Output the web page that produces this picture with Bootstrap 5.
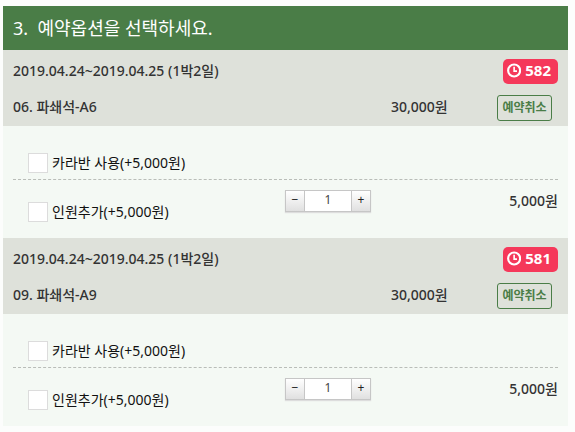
<!DOCTYPE html>
<html lang="ko">
<head>
<meta charset="utf-8">
<meta name="viewport" content="width=device-width, initial-scale=1">
<title>예약옵션</title>
<link href="https://cdn.jsdelivr.net/npm/bootstrap@5.3.0/dist/css/bootstrap.min.css" rel="stylesheet">
<style>
body{font-family:"Noto Sans","Noto Sans CJK KR",sans-serif;font-size:14px;line-height:20px;color:#333;background:#fcfdfc}
.reserve{margin:0 7px 0 3px;padding-top:6px}
.step-title{background:#4a7d47;color:#fff;font-size:18px;line-height:24px;padding:10px;font-weight:400}
.booking-head{background:#dee1da;padding:9px 10px 5px;font-weight:500;row-gap:11px}
.booking-head .caption{padding-bottom:2px}
.name-col{flex:0 0 378px}
.timer{background:#f5385a;border-radius:5px;font-size:15px;line-height:23px;font-weight:700;padding:0 7px 2px 4px;gap:4px;width:55px;height:25px;color:#fff}
.cancel-btn{--bs-btn-color:#4a7d47;--bs-btn-border-color:#4a7d47;--bs-btn-hover-bg:#4a7d47;--bs-btn-hover-color:#fff;--bs-btn-padding-x:4px;--bs-btn-padding-y:0;--bs-btn-font-size:12px;--bs-btn-line-height:24px;--bs-btn-border-radius:3px;--bs-btn-font-weight:600;width:55px;height:26px;margin-right:6px;white-space:nowrap}
.options{background:#f4f9f4;padding:0 10px}
.option-row{padding-left:15px}
.option-row label{color:#111;margin-left:4px}
.first-option{padding-top:27px;padding-bottom:6px;border-bottom:1px dashed #b9bdb8}
.second-option{padding-top:10px;padding-bottom:16px}
.second-option .pick{margin-top:12px;flex:0 0 257px}
.options .form-check-input{width:20px;height:20px;margin:0;border:1px solid #dcdcdc;border-radius:0;background-color:#fff;flex:none}
.options .form-check-input:checked{background-color:#4a7d47}
.qty{width:86px;height:22px;flex:none;border:1px solid #c6c6c6;box-shadow:0 1px 1px #ddd}
.qty button{width:18px;border:0;padding:0 0 3px;line-height:17px;font-size:12px;color:#222;background:linear-gradient(#fff,#e0e0e0)}
.qty input{flex:1 1 0;min-width:0;border:solid #c6c6c6;border-width:0 1px;padding:0 0 2px;text-align:center;font-size:12px;color:#444;background:#fff}
.price{font-weight:500;margin-top:1px}
</style>
<script defer src="https://cdn.jsdelivr.net/npm/bootstrap@5.3.0/dist/js/bootstrap.bundle.min.js"></script>
</head>
<body>
<main class="reserve">
  <h1 class="step-title m-0">3.&nbsp; 예약옵션을 선택하세요.</h1>

  <section>
    <div class="booking-head d-flex flex-column">
      <div class="d-flex justify-content-between align-items-center">
        <span class="caption">2019.04.24~2019.04.25 (1박2일)</span>
        <span class="timer d-flex align-items-center"><svg width="15" height="15" viewBox="0 0 14 14" fill="none" stroke="currentColor" aria-hidden="true"><circle cx="7" cy="7" r="5.9" stroke-width="2.1"/><path d="M7 3.3V7.6H9.8" stroke-width="1.6"/></svg>582</span>
      </div>
      <div class="d-flex align-items-center">
        <span class="name-col caption">06. 파쇄석-A6</span>
        <span class="caption">30,000원</span>
        <button type="button" class="btn cancel-btn ms-auto">예약취소</button>
      </div>
    </div>
    <div class="options">
      <div class="option-row first-option d-flex align-items-center">
        <input class="form-check-input" type="checkbox" id="caravan6"><label for="caravan6">카라반 사용(+5,000원)</label>
      </div>
      <div class="option-row second-option d-flex align-items-start">
        <div class="pick d-flex align-items-center"><input class="form-check-input" type="checkbox" id="person6"><label for="person6">인원추가(+5,000원)</label></div>
        <div class="qty d-flex"><button type="button" aria-label="감소">−</button><input type="text" value="1" aria-label="추가 인원"><button type="button" aria-label="증가">+</button></div>
        <span class="price ms-auto">5,000원</span>
      </div>
    </div>
  </section>

  <section>
    <div class="booking-head d-flex flex-column">
      <div class="d-flex justify-content-between align-items-center">
        <span class="caption">2019.04.24~2019.04.25 (1박2일)</span>
        <span class="timer d-flex align-items-center"><svg width="15" height="15" viewBox="0 0 14 14" fill="none" stroke="currentColor" aria-hidden="true"><circle cx="7" cy="7" r="5.9" stroke-width="2.1"/><path d="M7 3.3V7.6H9.8" stroke-width="1.6"/></svg>581</span>
      </div>
      <div class="d-flex align-items-center">
        <span class="name-col caption">09. 파쇄석-A9</span>
        <span class="caption">30,000원</span>
        <button type="button" class="btn cancel-btn ms-auto">예약취소</button>
      </div>
    </div>
    <div class="options">
      <div class="option-row first-option d-flex align-items-center">
        <input class="form-check-input" type="checkbox" id="caravan9"><label for="caravan9">카라반 사용(+5,000원)</label>
      </div>
      <div class="option-row second-option d-flex align-items-start">
        <div class="pick d-flex align-items-center"><input class="form-check-input" type="checkbox" id="person9"><label for="person9">인원추가(+5,000원)</label></div>
        <div class="qty d-flex"><button type="button" aria-label="감소">−</button><input type="text" value="1" aria-label="추가 인원"><button type="button" aria-label="증가">+</button></div>
        <span class="price ms-auto">5,000원</span>
      </div>
    </div>
  </section>
</main>
</body>
</html>
